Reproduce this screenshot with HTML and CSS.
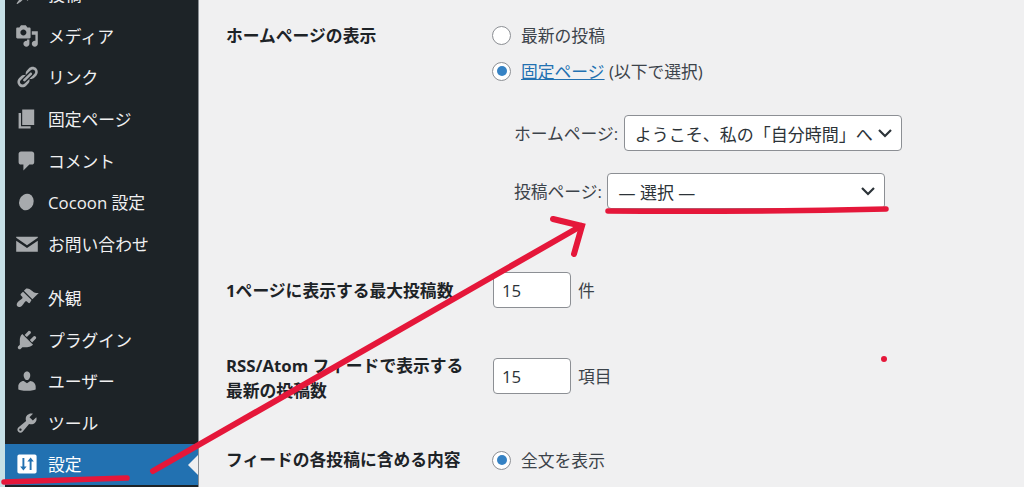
FILE: index.html
```html
<!DOCTYPE html>
<html lang="ja">
<head>
<meta charset="utf-8">
<title>表示設定</title>
<link rel="stylesheet" href="styles.css">
</head>
<body>
<div class="page">
  <div class="edge"></div>
  <nav class="sidebar">
    <ul class="menu">
      <li class="item"><svg class="icon" viewBox="0 0 20 20"><path d="M10.44 3.02l1.82-1.82 6.36 6.35-1.83 1.82c-1.05-.68-2.48-.57-3.41.36l-.75.75c-.92.93-1.04 2.35-.35 3.41l-1.83 1.82-2.41-2.41-2.8 2.79c-.42.42-3.38 2.71-3.8 2.29s1.86-3.39 2.28-3.81l2.79-2.79L4.1 9.36l1.83-1.82c1.05.69 2.48.57 3.4-.36l.75-.75c.93-.92 1.05-2.35.36-3.41z"/></svg><span>投稿</span></li>
      <li class="item"><svg class="icon" viewBox="0 0 20 20"><path d="M13 11V4c0-.55-.45-1-1-1h-1.67L9 1H5L3.67 3H2c-.55 0-1 .45-1 1v7c0 .55.45 1 1 1h10c.55 0 1-.45 1-1zM7 4.5c1.38 0 2.5 1.12 2.5 2.5S8.38 9.5 7 9.5 4.5 8.38 4.5 7 5.62 4.5 7 4.5zM14 6h5v10.5c0 1.38-1.12 2.5-2.5 2.5S14 17.88 14 16.5s1.12-2.5 2.5-2.5c.17 0 .34.02.5.05V9h-3V6zm-4 8.05V13h2v3.5c0 1.38-1.12 2.5-2.5 2.5S7 17.88 7 16.5 8.12 14 9.5 14c.17 0 .34.02.5.05z"/></svg><span>メディア</span></li>
      <li class="item"><svg class="icon" viewBox="0 0 20 20"><path d="M17.74 2.76c1.68 1.69 1.68 4.41 0 6.1l-1.53 1.52c-1.12 1.12-2.7 1.47-4.14 1.09l2.62-2.61.76-.77.76-.76c.84-.84.84-2.2 0-3.04-.84-.85-2.2-.85-3.04 0l-.77.76-3.38 3.38c-.37-1.44-.02-3.02 1.1-4.14l1.52-1.53c1.69-1.68 4.42-1.68 6.1 0zM8.59 13.43l5.34-5.34c.42-.42.42-1.1 0-1.52-.44-.43-1.13-.39-1.53 0l-5.33 5.34c-.42.42-.42 1.1 0 1.52.44.43 1.13.39 1.52 0zm-.76 2.29l4.14-4.15c.38 1.44.03 3.02-1.09 4.14l-1.52 1.53c-1.69 1.68-4.41 1.68-6.1 0-1.68-1.68-1.68-4.42 0-6.1l1.53-1.52c1.12-1.12 2.7-1.47 4.14-1.1l-4.14 4.15c-.85.84-.85 2.2 0 3.05.84.84 2.2.84 3.04 0z"/></svg><span>リンク</span></li>
      <li class="item"><svg class="icon" viewBox="0 0 20 20"><path d="M6 15V2h10v13H6zm-1 1h8v2H3V5h2v11z"/></svg><span>固定ページ</span></li>
      <li class="item"><svg class="icon" viewBox="0 0 20 20"><path d="M5 2h9c1.1 0 2 .9 2 2v7c0 1.1-.9 2-2 2h-2l-5 5v-5H5c-1.1 0-2-.9-2-2V4c0-1.1.9-2 2-2z"/></svg><span>コメント</span></li>
      <li class="item"><svg class="icon" viewBox="0 0 20 20"><ellipse cx="9.500" cy="10" rx="6" ry="7" transform="rotate(20 9.500 10)"/></svg><span>Cocoon 設定</span></li>
      <li class="item"><svg class="icon" viewBox="0 0 20 20"><path d="M1 4h18v.8l-9 6.2-9-6.2zM1 7.200l9 6.200 9-6.200V16.500H1z"/></svg><span>お問い合わせ</span></li>
      <li class="item item-group"><svg class="icon" viewBox="0 0 20 20"><path d="M14.48 11.06L7.41 3.99l1.5-1.5c.5-.56 2.3-.47 3.51.32 1.21.8 1.43 1.28 2.91 2.1 1.18.64 2.45 1.26 4.45.85zm-.71.71L6.7 4.7 4.93 6.47c-.39.39-.39 1.02 0 1.41l1.06 1.06c.39.39.39 1.03 0 1.42-.6.6-1.43 1.11-2.21 1.69-.35.26-.7.53-1.01.84-1.36 1.36-1.84 3.03-.8 4.08 1.05 1.05 2.7.56 4.06-.8.31-.31.58-.66.84-1.01.58-.78 1.09-1.61 1.69-2.21.39-.39 1.03-.39 1.42 0l1.06 1.06c.39.39 1.02.39 1.41 0z"/></svg><span>外観</span></li>
      <li class="item"><svg class="icon" viewBox="0 0 20 20"><path d="M13.11 4.36L9.87 7.6 8 5.73l3.24-3.24c.35-.34 1.05-.2 1.56.32.52.51.66 1.21.31 1.55zm-8 1.77l.91-1.12 9.01 9.01-1.19.84c-.71.71-2.63 1.16-3.82 1.16H6.14L4.9 17.26c-.59.59-1.54.59-2.12 0-.59-.58-.59-1.53 0-2.12l1.24-1.24v-3.88c0-1.13.4-3.19 1.09-3.89zm7.26 3.97l3.24-3.24c.34-.35 1.04-.2 1.55.31.52.52.66 1.22.32 1.57l-3.24 3.24z"/></svg><span>プラグイン</span></li>
      <li class="item"><svg class="icon" viewBox="0 0 20 20"><path d="M10 9.25c-2.27 0-2.73-3.44-2.73-3.44C7 4.02 7.82 2 9.97 2c2.16 0 2.98 2.02 2.71 3.81 0 0-.41 3.44-2.68 3.44zm0 2.57L12.72 10c2.39 0 4.52 2.33 4.52 4.53v2.49s-3.65 1.13-7.24 1.13c-3.65 0-7.24-1.13-7.24-1.13v-2.49c0-2.25 1.94-4.48 4.47-4.48z"/></svg><span>ユーザー</span></li>
      <li class="item"><svg class="icon" viewBox="0 0 20 20"><path d="M16.68 9.77c-1.34 1.34-3.3 1.67-4.95.99l-5.41 6.52c-.99.99-2.59.99-3.58 0s-.99-2.59 0-3.57l6.52-5.42c-.68-1.65-.35-3.61.99-4.95 1.28-1.28 3.12-1.62 4.72-1.06l-2.89 2.89 2.82 2.82 2.86-2.87c.53 1.58.18 3.39-1.08 4.65zM3.81 16.21c.4.39 1.04.39 1.43 0 .4-.4.4-1.04 0-1.43-.39-.4-1.03-.4-1.43 0-.39.39-.39 1.03 0 1.43z"/></svg><span>ツール</span></li>
      <li class="item item-active"><svg class="icon" viewBox="0 0 20 20"><path fill-rule="evenodd" d="M3.500 2h13A1.500 1.500 0 0 1 18 3.500v13a1.500 1.500 0 0 1-1.500 1.500h-13A1.500 1.500 0 0 1 2 16.500v-13A1.500 1.500 0 0 1 3.500 2zM6.200 5v7H4.300l2.700 3.500L9.700 12H7.800V5zM12.200 15V8h-1.900L13 4.500 15.700 8h-1.900v7z"/></svg><span>設定</span></li>
    </ul>
  </nav>
  <main class="content">
    <section class="row">
      <h2 class="label label-line label-first">ホームページの表示</h2>
      <div class="field">
        <label class="choice"><input class="radio" type="radio" name="front"><span>最新の投稿</span></label>
        <label class="choice"><input class="radio" type="radio" name="front" checked><span><a class="link" href="#">固定ページ</a> (以下で選択)</span></label>
        <div class="pages">
          <div class="page-line">
            <span>ホームページ:</span>
            <div class="select"><span class="select-text">ようこそ、私の「自分時間」へ</span><svg class="chevron" viewBox="0 0 16 10"><path d="M2 2l6 6 6-6"/></svg></div>
          </div>
          <div class="page-line">
            <span>投稿ページ:</span>
            <div class="select"><span class="select-text">— 選択 —</span><svg class="chevron" viewBox="0 0 16 10"><path d="M2 2l6 6 6-6"/></svg></div>
          </div>
        </div>
      </div>
    </section>
    <section class="row row-posts">
      <h2 class="label label-line">1ページに表示する最大投稿数</h2>
      <div class="field number-line"><input class="number" type="text" value="15"><span>件</span></div>
    </section>
    <section class="row row-rss">
      <h2 class="label label-two">RSS/Atom フィードで表示する最新の投稿数</h2>
      <div class="field number-line"><input class="number" type="text" value="15"><span>項目</span></div>
    </section>
    <section class="row row-feed">
      <h2 class="label label-line">フィードの各投稿に含める内容</h2>
      <div class="field">
        <label class="choice"><input class="radio" type="radio" name="feed" checked><span>全文を表示</span></label>
        <label class="choice choice-tight"><input class="radio" type="radio" name="feed"><span>抜粋</span></label>
      </div>
    </section>
  </main>
  <svg class="marks" viewBox="0 0 1024 487">
    <path class="mark mark-under" d="M608 211 Q750 212 886 209"/>
    <path class="mark mark-under" d="M4 482 Q70 480 127 478"/>
    <path class="mark" d="M153 471 L581 226"/>
    <path class="mark" d="M553 219 L582 226 L574 254"/>
    <circle class="dot" cx="884" cy="359" r="3"/>
  </svg>
</div>
</body>
</html>
```
FILE: styles.css
```css
* { box-sizing: border-box; }
html, body { margin: 0; height: 100%; overflow: hidden; }
body {
  font-family: "Open Sans", "Noto Sans CJK JP", sans-serif;
  font-size: 16.8px;
  color: #3c434a;
  background: #f0f0f1;
}
.page { position: relative; display: flex; width: 1024px; height: 487px; overflow: hidden; }
.edge { width: 5px; flex: none; background: #c6e0e6; }
.sidebar { width: 194px; flex: none; background: #1d2327; border-right: 1px solid #8a8f94; }
.menu { list-style: none; margin: -26.5px 0 0; padding: 0; }
.item {
  position: relative;
  display: flex;
  align-items: center;
  height: 41.6px;
  padding-left: 10px;
  color: #f0f0f1;
}
.item-group { margin-top: 12.5px; }
.item-active { background: #2271b1; color: #fff; height: 40.5px; margin-top: .5px; }
.item-active::after {
  content: "";
  position: absolute;
  right: 0;
  top: 10.5px;
  border: 10px solid transparent;
  border-left-width: 0;
  border-right-color: #f0f0f1;
}
.icon { width: 24px; height: 24px; flex: none; fill: #a7aaad; margin-right: 9px; }
.item-active .icon { fill: #fff; }
.content { flex: 1; padding: 17px 0 0 27px; }
.row { display: grid; grid-template-columns: 266px 1fr; align-items: start; }
.row-posts { margin-top: 63px; }
.row-rss { margin-top: 49px; }
.row-feed { margin-top: 39px; }
.label { margin: 0; font-size: 16.8px; font-weight: 700; color: #1d2327; }
.label-line { line-height: 36px; }
.label-first { margin-top: 1px; }
.label-two { line-height: 25px; width: 240px; margin-top: -6px; padding-top: 1px; }
.row-posts .label-line { margin-top: 1px; }
.choice { display: flex; align-items: center; height: 36px; }
.choice-tight { height: 24px; margin-top: 7px; }
.radio {
  appearance: none;
  width: 19px;
  height: 19px;
  margin: 0 10px 0 0;
  border: 1px solid #8c8f94;
  border-radius: 50%;
  background: #fff;
  flex: none;
  position: relative;
}
.radio:checked::before {
  content: "";
  position: absolute;
  inset: 3.5px;
  border-radius: 50%;
  background: #3582c4;
}
.link { color: #2271b1; text-decoration: underline; }
.pages { margin-top: 26px; padding-left: 22px; display: flex; flex-direction: column; gap: 22px; }
.page-line { display: flex; align-items: center; gap: 5.5px; }
.select {
  display: flex;
  align-items: center;
  justify-content: space-between;
  width: 278px;
  height: 36px;
  padding: 0 8px 0 10px;
  background: #fff;
  border: 1px solid #8c8f94;
  border-radius: 4px;
  color: #2c3338;
}
.select-text { white-space: nowrap; font-size: 17px; }
.chevron { width: 16px; height: 10px; flex: none; fill: none; stroke: #2c3338; stroke-width: 2.2; }
.number-line { display: flex; align-items: center; gap: 7px; padding-left: 1px; }
.number {
  width: 78px;
  height: 36px;
  padding: 0 8px;
  font: inherit;
  color: #2c3338;
  background: #fff;
  border: 1px solid #8c8f94;
  border-radius: 4px;
}
.marks { position: absolute; left: 0; top: 0; width: 1024px; height: 487px; pointer-events: none; }
.mark { fill: none; stroke: #e5173a; stroke-width: 6; stroke-linecap: round; stroke-linejoin: miter; }
.mark-under { stroke-width: 5.5; }
.dot { fill: #e5173a; }
```
